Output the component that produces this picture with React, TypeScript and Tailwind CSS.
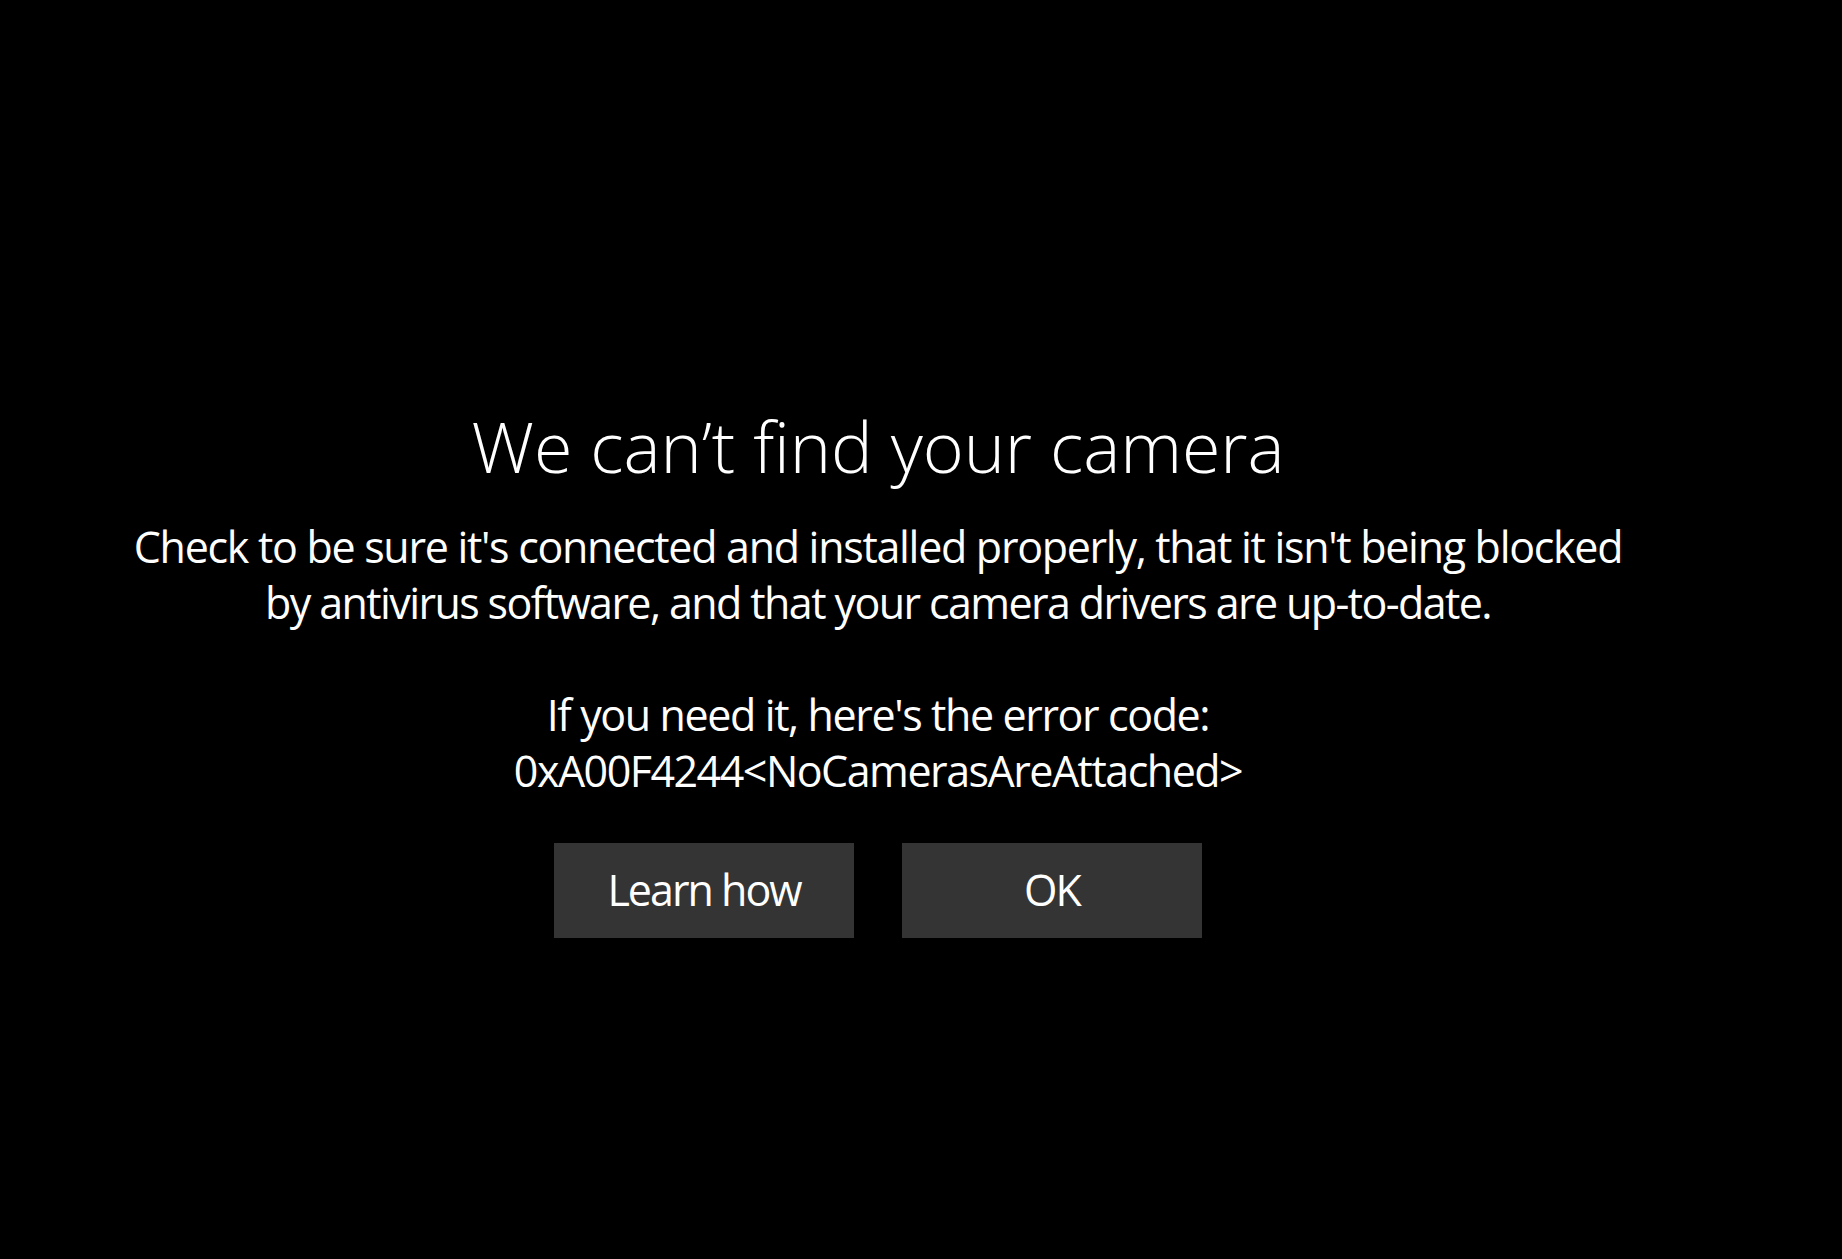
import React from "react";

export default function App() {
  return (
    <div
      className="w-[1842px] h-[1259px] bg-black text-white overflow-hidden"
      style={{ fontFamily: '"Open Sans", "Noto Sans", sans-serif' }}
    >
      <div className="w-[1756px] flex flex-col items-center pt-[398px]">
        <h1 className="text-[70px] font-light leading-[96px] tracking-[-0.1px]">
          We can’t find your camera
        </h1>
        <div className="mt-[25px] text-[43px] leading-[56px] text-center tracking-[-1.3px]">
          <p>Check to be sure it's connected and installed properly, that it isn't being blocked</p>
          <p className="tracking-[-1.6px]">by antivirus software, and that your camera drivers are up-to-date.</p>
          <p className="mt-[56px] tracking-[-1.4px]">If you need it, here's the error code:</p>
          <p className="tracking-[-1.5px]">0xA00F4244&lt;NoCamerasAreAttached&gt;</p>
        </div>
        <div className="mt-[44px] flex gap-[48px]">
          <button className="w-[300px] h-[95px] bg-[#343434] text-[43px] tracking-[-2px] text-white">
            Learn how
          </button>
          <button className="w-[300px] h-[95px] bg-[#343434] text-[43px] tracking-[-2px] text-white">
            OK
          </button>
        </div>
      </div>
    </div>
  );
}
